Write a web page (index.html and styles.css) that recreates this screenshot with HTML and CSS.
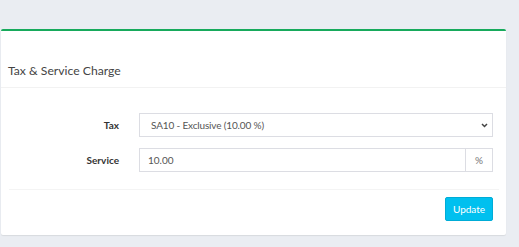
FILE: index.html
```html
<!DOCTYPE html>
<html>
<head>
<meta charset="utf-8">
<link rel="stylesheet" href="styles.css">
</head>
<body>
<div class="page">
  <div class="box">
    <div class="box-header">
      <h3 class="box-title">Tax &amp; Service Charge</h3>
    </div>
    <div class="box-body">
      <div class="form-row">
        <label class="form-label">Tax</label>
        <div class="control select">
          <span class="select-text">SA10 - Exclusive (10.00 %)</span>
          <svg class="chev" width="7" height="5" viewBox="0 0 7 5"><path d="M1 1 L3.5 3.5 L6 1" fill="none" stroke="#444" stroke-width="1.5"/></svg>
        </div>
      </div>
      <div class="form-row">
        <label class="form-label">Service</label>
        <div class="control group">
          <span class="input-text">10.00</span>
          <span class="addon">%</span>
        </div>
      </div>
    </div>
    <div class="box-footer">
      <button class="btn-update">Update</button>
    </div>
  </div>
</div>
</body>
</html>
```
FILE: styles.css
```css
html, body {
  margin: 0;
  padding: 0;
  background: #eaedf2;
  font-family: Lato, "Source Sans Pro", sans-serif;
  color: #333;
}
.page {
  padding: 29px 13px 12px 1px;
}
.box {
  background: #fff;
  border-top: 2px solid #17aa5c;
  border-radius: 2px;
  box-shadow: 0 1px 1px rgba(0,0,0,0.08);
}
.box-header {
  height: 57px;
  border-bottom: 1px solid #f2f2f2;
  display: flex;
  align-items: flex-end;
  padding: 0 8px 7px 7px;
  box-sizing: border-box;
}
.box-title {
  margin: 0;
  font-size: 12.2px;
  font-weight: 400;
  color: #444;
  line-height: 18px;
}
.box-body {
  padding: 25px 13px 17px 8px;
  display: flex;
  flex-direction: column;
  gap: 11px;
}
.form-row {
  display: flex;
  align-items: center;
}
.form-label {
  width: 110px;
  text-align: right;
  font-size: 10px;
  font-weight: 700;
  color: #333;
  padding-right: 20px;
}
.control {
  flex: 1;
  height: 24px;
  border: 1px solid #dcdde3;
  box-sizing: border-box;
  display: flex;
  align-items: center;
  font-size: 10px;
  color: #555;
}
.select {
  padding: 0 4px 0 11px;
  justify-content: space-between;
}
.select-text {
  letter-spacing: -0.15px;
}
.input-text {
  flex: 1;
  padding-left: 8px;
}
.addon {
  width: 26px;
  height: 100%;
  border-left: 1px solid #dcdde3;
  display: flex;
  align-items: center;
  justify-content: center;
  color: #777;
  font-size: 10px;
}
.box-footer {
  margin: 0 7px 0 8px;
  border-top: 1px solid #f4f4f4;
  padding: 7px 6px 14px 0;
  display: flex;
  justify-content: flex-end;
}
.btn-update {
  width: 48px;
  height: 24px;
  background: #00c0ef;
  border: 1px solid #00acd6;
  border-radius: 2px;
  color: #fff;
  font-family: inherit;
  font-size: 10px;
  padding: 0;
}
```
